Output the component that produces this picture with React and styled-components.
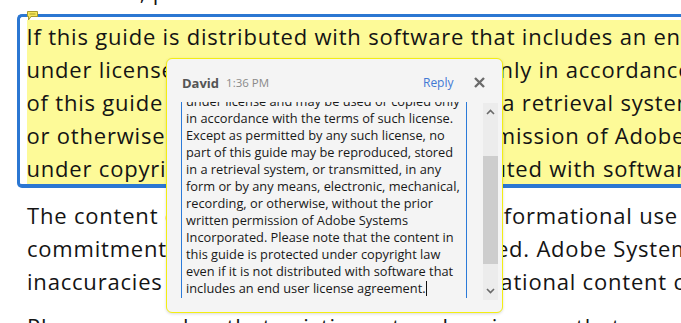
import React from "react";
import styled, { createGlobalStyle } from "styled-components";

const GlobalStyle = createGlobalStyle`
  html, body {
    margin: 0;
    padding: 0;
    background: #fff;
    overflow: hidden;
  }
`;

const Page = styled.div`
  position: relative;
  width: 681px;
  height: 323px;
  overflow: hidden;
  box-sizing: border-box;
  padding-left: 17px;
  font-family: "Open Sans", "Noto Sans", sans-serif;
  font-size: 22px;
  letter-spacing: 0.8px;
  line-height: 32.8px;
  color: #141414;
`;

const Line = styled.div`
  white-space: nowrap;
  padding-left: ${(p) => (p.$inset ? "10px" : "0")};
`;

const TopLine = styled(Line)`
  margin-top: -25px;
`;

const Highlight = styled.div`
  margin-top: 6.5px;
  border: 3.5px solid #2b77d2;
  border-right: none;
  border-bottom-width: 4px;
  border-radius: 5px 0 0 5px;
  padding: 3.2px 0 0 6.5px;
`;

const Marked = styled.div`
  background: #fdfa98;
`;

const Paragraph = styled.div`
  margin-top: ${(p) => p.$gap}px;
`;

const NoteIcon = styled.svg`
  position: absolute;
  left: 27px;
  top: 11px;
`;

const Popup = styled.div`
  position: absolute;
  left: 166px;
  top: 58px;
  width: 337px;
  height: 255px;
  box-sizing: border-box;
  background: #f4f4f4;
  border: 1.5px solid #f3ee12;
  border-radius: 6px;
  box-shadow: 0 1px 3px rgba(0, 0, 0, 0.15);
  font-family: "Open Sans", "Noto Sans", sans-serif;
  letter-spacing: 0;
  line-height: normal;
  padding: 13.5px 3.5px 0 14px;
`;

const Header = styled.div`
  display: flex;
  align-items: center;
  height: 20px;
  padding: 0 14px 0 1px;
`;

const Author = styled.span`
  font-weight: 700;
  font-size: 13px;
  color: #555;
`;

const Time = styled.span`
  margin-left: 7px;
  font-size: 11.5px;
  color: #8a8a8a;
`;

const Spacer = styled.div`
  flex: 1;
`;

const ReplyLink = styled.span`
  font-size: 12px;
  color: #4279d4;
`;

const CloseButton = styled.svg`
  margin-left: 20px;
  display: block;
`;

const Body = styled.div`
  display: flex;
  align-items: flex-start;
  gap: 16px;
  margin-top: 9px;
`;

const TextArea = styled.div`
  width: 286px;
  height: 196px;
  box-sizing: border-box;
  border-left: 1px solid #2b7ad8;
  border-right: 1px solid #2b7ad8;
  overflow: hidden;
  padding-left: 4px;
  font-size: 12.8px;
  line-height: 17px;
  white-space: nowrap;
  color: #181818;
`;

const Scrolled = styled.div`
  margin-top: -8.5px;
`;

const Caret = styled.span`
  display: inline-block;
  width: 1px;
  height: 15px;
  background: #111;
  vertical-align: -3px;
`;

const Scrollbar = styled.div`
  display: flex;
  flex-direction: column;
  width: 15px;
  height: 197px;
  margin-top: 1px;
  background: #ececec;
`;

const Arrow = styled.div`
  height: 18px;
  display: flex;
  align-items: center;
  justify-content: center;
`;

const Thumb = styled.div`
  margin-top: 35px;
  height: 108px;
  background: #cdcdcd;
`;

const highlighted = [
  "If this guide is distributed with software that includes an end user agreement, this guide, as well as the software described in it, is furnished",
  "under license and may be used or copied only in accordance with the terms of such license. Except as permitted by any such license, no part",
  "of this guide may be reproduced, stored in a retrieval system, or transmitted, in any form or by any means, electronic, mechanical, recording,",
  "or otherwise, without the prior written permission of Adobe Systems Incorporated. Please note that the content in this guide is protected",
  "under copyright law even if it is not distributed with software that includes an end user license agreement.",
];

const content = [
  "The content of this guide is furnished for informational use only, is subject to change without notice, and should not be construed as a",
  "commitment by Adobe Systems Incorporated. Adobe Systems Incorporated assumes no responsibility or liability for any errors or",
  "inaccuracies that may appear in the informational content contained in this guide.",
];

const comment = [
  "under license and may be used or copied only",
  "in accordance with the terms of such license.",
  "Except as permitted by any such license, no",
  "part of this guide may be reproduced, stored",
  "in a retrieval system, or transmitted, in any",
  "form or by any means, electronic, mechanical,",
  "recording, or otherwise, without the prior",
  "written permission of Adobe Systems",
  "Incorporated. Please note that the content in",
  "this guide is protected under copyright law",
  "even if it is not distributed with software that",
];

const Chevron = ({ down }) => (
  <svg width="9" height="6" viewBox="0 0 9 6">
    <path
      d={down ? "M1 1 L4.5 4.5 L8 1" : "M1 5 L4.5 1.5 L8 5"}
      fill="none"
      stroke="#6a6a6a"
      strokeWidth="1.6"
    />
  </svg>
);

export default function App() {
  return (
    <>
      <GlobalStyle />
      <Page>
        <TopLine $inset>Acrobat XI, part of the Adobe Document Cloud</TopLine>

        <Highlight>
          <Marked>
            {highlighted.map((t) => (
              <Line key={t}>{t}</Line>
            ))}
          </Marked>
        </Highlight>

        <Paragraph $gap={11}>
          {content.map((t) => (
            <Line $inset key={t}>
              {t}
            </Line>
          ))}
        </Paragraph>

        <Paragraph $gap={12.6}>
          <Line $inset>
            Please remember that existing artwork or images that you may want to include in your project
          </Line>
        </Paragraph>

        <NoteIcon width="11" height="10" viewBox="0 0 11 10">
          <path
            d="M0.5 0.5 H10.5 V5.5 H4 L1.5 9 V5.5 H0.5 Z"
            fill="#f6e65a"
            stroke="#a8992c"
            strokeWidth="1"
          />
          <path d="M2.5 3 H8.5" stroke="#a8992c" strokeWidth="1" />
        </NoteIcon>

        <Popup>
          <Header>
            <Author>David</Author>
            <Time>1:36 PM</Time>
            <Spacer />
            <ReplyLink>Reply</ReplyLink>
            <CloseButton width="11" height="11" viewBox="0 0 11 11">
              <path d="M1 1 L10 10 M10 1 L1 10" stroke="#6b6b6b" strokeWidth="2.4" />
            </CloseButton>
          </Header>
          <Body>
            <TextArea>
              <Scrolled>
                {comment.map((t) => (
                  <div key={t}>{t}</div>
                ))}
                <div>
                  includes an end user license agreement.
                  <Caret />
                </div>
              </Scrolled>
            </TextArea>
            <Scrollbar>
              <Arrow>
                <Chevron />
              </Arrow>
              <Thumb />
              <Spacer />
              <Arrow>
                <Chevron down />
              </Arrow>
            </Scrollbar>
          </Body>
        </Popup>
      </Page>
    </>
  );
}
